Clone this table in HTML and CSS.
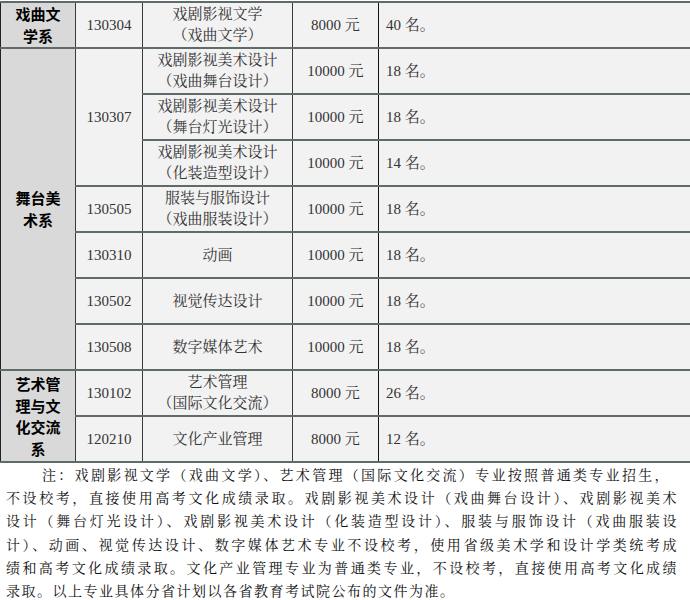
FILE: index.html
```html
<!DOCTYPE html>
<html lang="zh-CN">
<head>
<meta charset="utf-8">
<title>招生计划</title>
<link rel="stylesheet" href="styles.css">
</head>
<body>
<table class="plan">
  <colgroup>
    <col class="c-dept">
    <col class="c-code">
    <col class="c-major">
    <col class="c-fee">
    <col class="c-num">
  </colgroup>
  <tbody>
    <tr>
      <td class="dept">戏曲文<br>学系</td>
      <td class="code">130304</td>
      <td class="major">戏剧影视文学<br>（戏曲文学）</td>
      <td class="fee">8000 元</td>
      <td class="num">40 名。</td>
    </tr>
    <tr>
      <td class="dept" rowspan="7">舞台美<br>术系</td>
      <td class="code" rowspan="3">130307</td>
      <td class="major">戏剧影视美术设计<br>（戏曲舞台设计）</td>
      <td class="fee">10000 元</td>
      <td class="num">18 名。</td>
    </tr>
    <tr>
      <td class="major">戏剧影视美术设计<br>（舞台灯光设计）</td>
      <td class="fee">10000 元</td>
      <td class="num">18 名。</td>
    </tr>
    <tr>
      <td class="major">戏剧影视美术设计<br>（化装造型设计）</td>
      <td class="fee">10000 元</td>
      <td class="num">14 名。</td>
    </tr>
    <tr>
      <td class="code">130505</td>
      <td class="major">服装与服饰设计<br>（戏曲服装设计）</td>
      <td class="fee">10000 元</td>
      <td class="num">18 名。</td>
    </tr>
    <tr>
      <td class="code">130310</td>
      <td class="major">动画</td>
      <td class="fee">10000 元</td>
      <td class="num">18 名。</td>
    </tr>
    <tr>
      <td class="code">130502</td>
      <td class="major">视觉传达设计</td>
      <td class="fee">10000 元</td>
      <td class="num">18 名。</td>
    </tr>
    <tr>
      <td class="code">130508</td>
      <td class="major">数字媒体艺术</td>
      <td class="fee">10000 元</td>
      <td class="num">18 名。</td>
    </tr>
    <tr>
      <td class="dept dept-tall" rowspan="2">艺术管<br>理与文<br>化交流<br>系</td>
      <td class="code">130102</td>
      <td class="major">艺术管理<br>（国际文化交流）</td>
      <td class="fee">8000 元</td>
      <td class="num">26 名。</td>
    </tr>
    <tr>
      <td class="code">120210</td>
      <td class="major">文化产业管理</td>
      <td class="fee">8000 元</td>
      <td class="num">12 名。</td>
    </tr>
  </tbody>
</table>
<div class="note">
  <span class="line first">注：戏剧影视文学（戏曲文学）、艺术管理（国际文化交流）专业按照普通类专业招生，</span>
  <span class="line">不设校考，直接使用高考文化成绩录取。戏剧影视美术设计（戏曲舞台设计）、戏剧影视美术</span>
  <span class="line">设计（舞台灯光设计）、戏剧影视美术设计（化装造型设计）、服装与服饰设计（戏曲服装设</span>
  <span class="line">计）、动画、视觉传达设计、数字媒体艺术专业不设校考，使用省级美术学和设计学类统考成</span>
  <span class="line">绩和高考文化成绩录取。文化产业管理专业为普通类专业，不设校考，直接使用高考文化成绩</span>
  <span class="line last">录取。以上专业具体分省计划以各省教育考试院公布的文件为准。</span>
</div>
</body>
</html>
```

FILE: styles.css
```css
html, body {
  margin: 0;
  padding: 0;
  background: #ffffff;
}

body {
  width: 690px;
  font-family: "Liberation Serif", "Noto Serif CJK SC", "Noto Sans CJK SC", serif;
}

.plan {
  width: 690px;
  border-collapse: collapse;
  table-layout: fixed;
  margin-top: 1px;
}

.c-dept { width: 75px; }
.c-code { width: 67px; }
.c-major { width: 150px; }
.c-fee { width: 86px; }
.c-num { width: 312px; }

.plan tr {
  height: 46px;
}

.plan td {
  background: #f2f2f2;
  color: #333333;
  font-size: 15px;
  line-height: 21px;
  padding: 0;
  text-align: center;
  vertical-align: middle;
  border-top: 2px solid #5e6b69;
  border-bottom: 2px solid #5e6b69;
  border-left: 1px solid #3a3a3a;
  border-right: 1px solid #3a3a3a;
}

.plan td.dept {
  background: #d9d9d9;
  color: #000000;
  font-family: "Noto Sans CJK SC", sans-serif;
  font-weight: bold;
  font-size: 15px;
  line-height: 22px;
  border-left: 1px solid #222222;
}

.plan td.dept-tall {
  line-height: 21.5px;
}

.plan td.fee {
  border-right: 1px solid #111111;
}

.plan td.num {
  text-align: left;
  padding-left: 7px;
  border-left: 1px solid #111111;
  border-right: 2px solid #2a2a2a;
}

.note {
  padding: 0 12px 0 6px;
  font-family: "Noto Serif CJK SC", "Noto Sans CJK SC", serif;
  font-size: 14px;
  line-height: 23.2px;
  color: #111111;
  letter-spacing: 1.5px;
}

.note .line {
  display: block;
  text-align: justify;
  text-align-last: justify;
  white-space: nowrap;
}

.note .first {
  padding-left: 36px;
  padding-right: 8px;
}

.note .last {
  text-align: left;
  text-align-last: left;
}
```
